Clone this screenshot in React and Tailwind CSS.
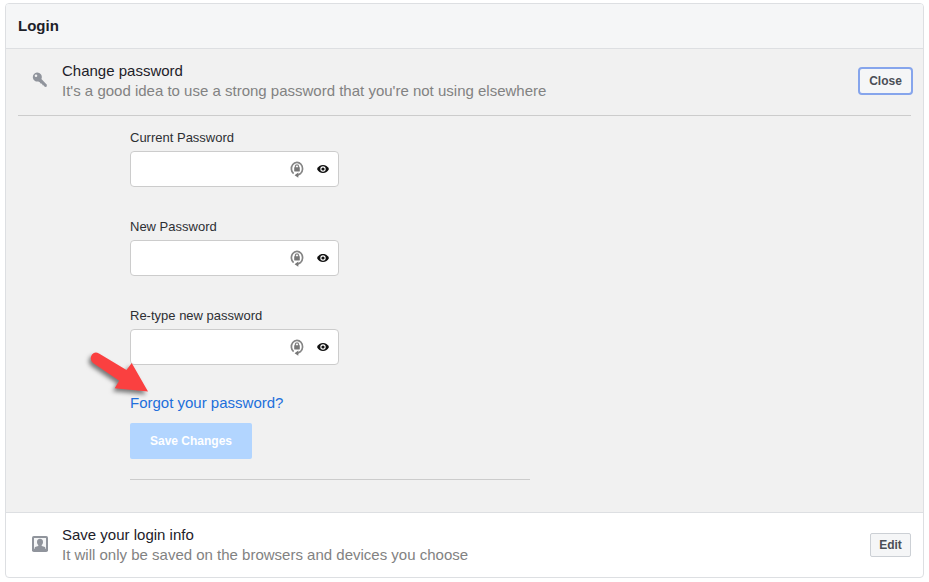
function KeyIcon() {
  return (
    <svg className="block h-4 w-4 shrink-0" viewBox="0 0 16 16">
      <path
        fill="#90949c"
        fillRule="evenodd"
        d="M5 .6a4.500 4.500 0 1 0 1.200 8.900l1.600.7.8 1.300 1.400.2.600 1.500 1.300.3.700 1.200 1.200.3.900-.5.200-1.800-5.500-5.700A4.500 4.500 0 0 0 5 .6ZM4 2.500a1.300 1.300 0 1 1 0 2.600 1.300 1.300 0 0 1 0-2.600Z"
      />
    </svg>
  );
}

function ProfileIcon() {
  return (
    <svg className="block h-4 w-4 shrink-0" viewBox="0 0 16 16">
      <rect width="16" height="16" rx="1.8" fill="#90949c" />
      <rect x="2" y="2" width="12" height="11" fill="#f5f6f7" />
      <path
        fill="#90949c"
        d="M8 2.800c2 0 3 1.300 3 3.100 0 1.400-.5 2.500-1.300 3.100v.9l2.500.8c1 .3 1.300 1 1.300 2.300v1h-11v-1c0-1.300.3-2 1.300-2.300l2.500-.8V9C5.500 8.400 5 7.300 5 5.900c0-1.800 1-3.100 3-3.100Z"
      />
    </svg>
  );
}

function LockCycleIcon() {
  return (
    <svg className="block h-[18px] w-4" viewBox="0 0 16 18">
      <path d="M4.600 13.700A5.600 6.300 0 1 1 11.600 13.500L8.500 15.300" fill="none" stroke="#858585" strokeWidth="1.700" />
      <path d="M5.600 15.200 9.300 12.600v5.200Z" fill="#777" />
      <path d="M6.400 8V6.400a1.600 1.600 0 0 1 3.200 0V8" fill="none" stroke="#858585" strokeWidth="1.300" />
      <rect x="5.200" y="7.200" width="5.600" height="4.200" rx=".4" fill="#777" />
    </svg>
  );
}

function EyeIcon() {
  return (
    <svg className="block h-2.5 w-3" viewBox="0 0 12 10">
      <path d="M0 5C1.200 2.300 3.400 1 6 1s4.800 1.300 6 4C10.800 7.700 8.600 9 6 9S1.200 7.700 0 5Z" fill="#111" />
      <circle cx="6" cy="5" r="2.700" fill="#fff" />
      <circle cx="6" cy="5" r="1.600" fill="#111" />
    </svg>
  );
}

function Field({ label }) {
  return (
    <label className="block h-[89px]">
      <span className="block h-[21px] text-[13px] leading-4 whitespace-nowrap text-[#2d2f33]">{label}</span>
      <span className="flex h-9 w-[209px] items-center rounded-[4px] border border-[#ccc] bg-white pr-[9px]">
        <input type="password" className="h-full min-w-0 flex-1 bg-transparent pl-3 outline-none" />
        <LockCycleIcon />
        <span className="ml-3">
          <EyeIcon />
        </span>
      </span>
    </label>
  );
}

function RowText({ title, note }) {
  return (
    <div className="ml-[14px] flex-1 text-[15px] leading-5 whitespace-nowrap">
      <div className="text-[#1d2129]">{title}</div>
      <div className="text-[#828282]">{note}</div>
    </div>
  );
}

export default function App() {
  return (
    <main className="relative h-[582px] w-[929px] overflow-hidden bg-white pt-[3px] pl-[5px] font-['Liberation_Sans',Arial,sans-serif]">
      <div className="h-[575px] w-[919px] overflow-hidden rounded-[4px] border border-[#dddfe2] bg-white">
        <header className="flex h-[45px] items-center border-b border-[#dddfe2] bg-[#f5f6f7] pl-3">
          <h1 className="text-[15px] leading-5 font-bold text-[#1d2129]">Login</h1>
        </header>

        <section className="h-[464px] border-b border-[#dddfe2] bg-[#f1f1f1]">
          <div className="mx-3 flex h-[67px] items-start border-b border-[#ccc] pt-3">
            <div className="mt-[11px] ml-[14px]">
              <KeyIcon />
            </div>
            <RowText title="Change password" note="It's a good idea to use a strong password that you're not using elsewhere" />
            <button className="mt-[6px] -mr-[2px] h-7 w-[55px] rounded-[4px] border-2 border-[#86a5ec] bg-[#f5f6f7] text-[12px] font-bold text-[#4b4f56]">
              Close
            </button>
          </div>

          <div className="ml-[124px] w-[400px] pt-[14px]">
            <Field label="Current Password" />
            <Field label="New Password" />
            <Field label="Re-type new password" />
            <a href="#" className="-mt-1 block h-[30px] text-[15px] leading-5 text-[#216fdb]">
              Forgot your password?
            </a>
            <button className="block h-9 w-[122px] rounded-[2px] bg-[#b2d5ff] text-[12px] font-bold text-white">
              Save Changes
            </button>
            <hr className="mt-5 border-t border-[#ccc]" />
          </div>
        </section>

        <section className="flex h-16 items-start pt-3 pr-3 pl-[26px]">
          <div className="mt-[11px]">
            <ProfileIcon />
          </div>
          <RowText title="Save your login info" note="It will only be saved on the browsers and devices you choose" />
          <button className="mt-2 h-6 w-[41px] rounded-[2px] border border-[#ccd0d5] bg-[#f5f6f7] text-[12px] font-bold text-[#4b4f56]">
            Edit
          </button>
        </section>
      </div>

      <svg className="pointer-events-none absolute top-[345px] left-[84px] h-[60px] w-[76px] drop-shadow-[-2px_3px_2px_rgba(0,0,0,0.5)]" viewBox="84 345 76 60">
        <path d="M92 354.500q3-3.500 7-1L126.500 370l5.200-7 16.300 28.600-33.300-3.300 4.500-7.500L93 363q-4-4-1-8.500Z" fill="#fa4040" />
      </svg>
    </main>
  );
}
